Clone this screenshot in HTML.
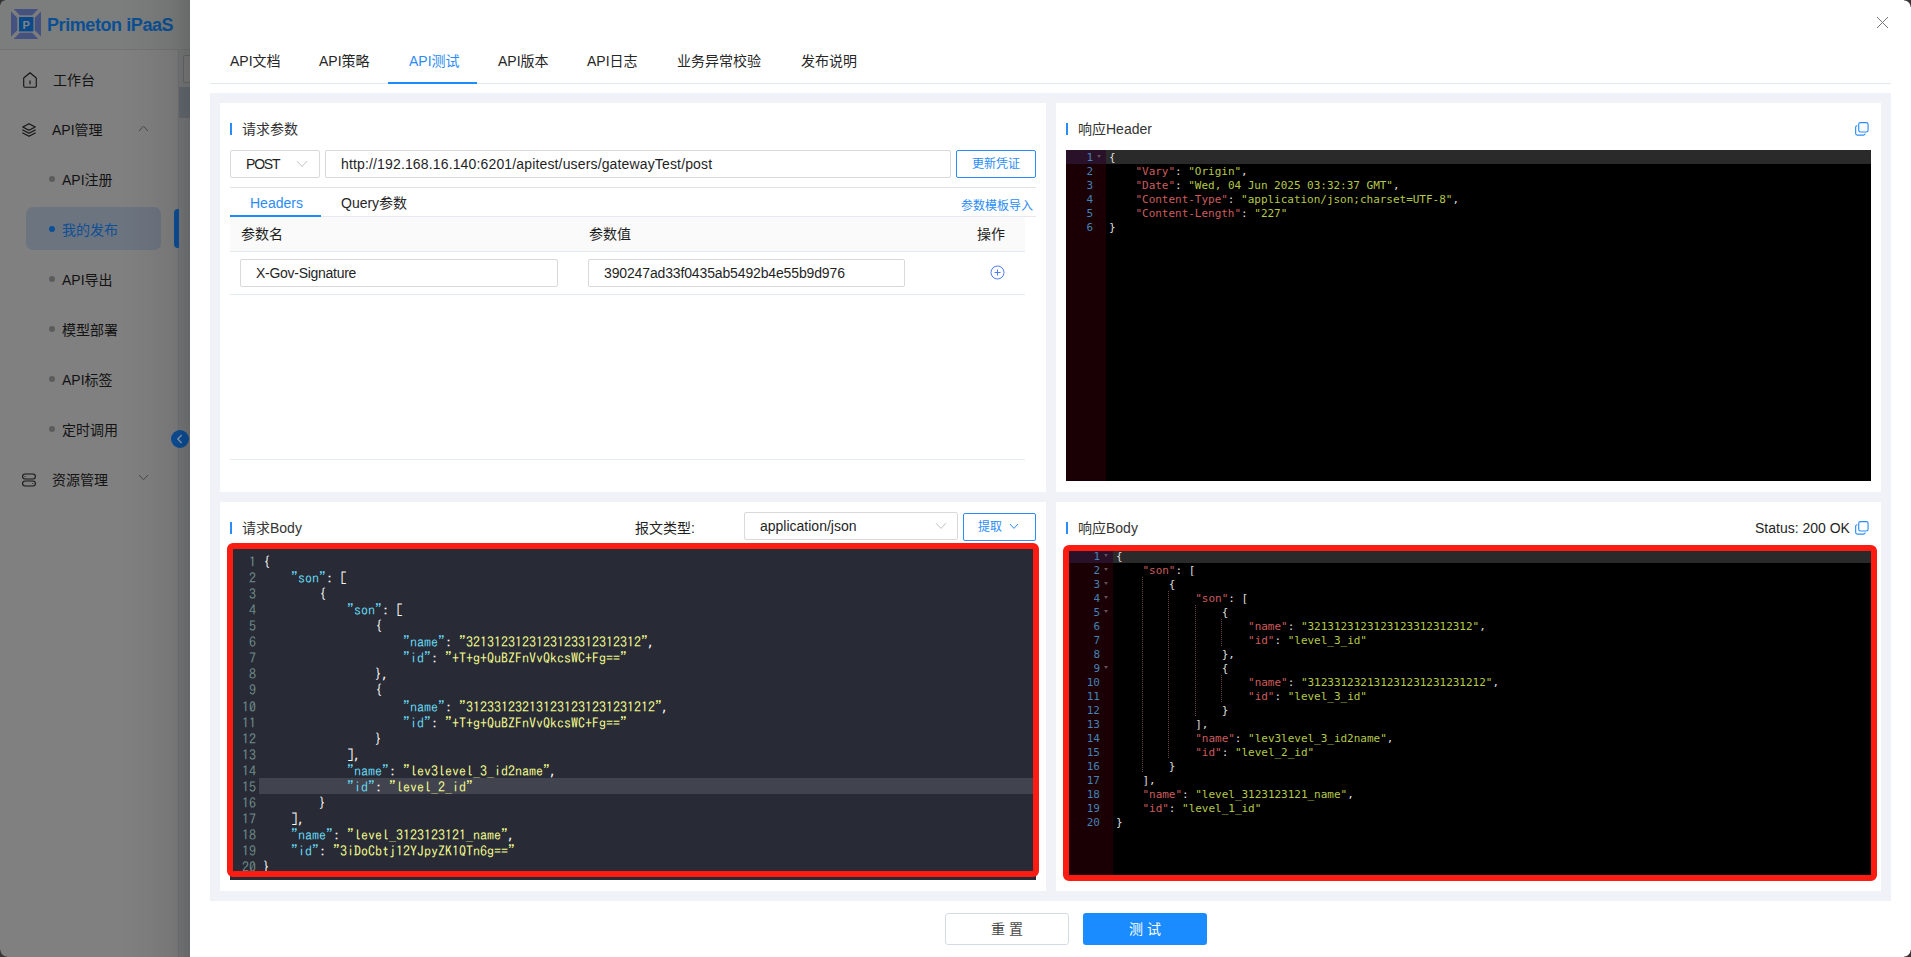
<!DOCTYPE html><html lang="zh-CN"><head><meta charset="utf-8"><title>Primeton iPaaS</title><style>
*{box-sizing:border-box;margin:0;padding:0}
html,body{width:1911px;height:957px;overflow:hidden;background:#fff}
body{position:relative;font-family:"Liberation Sans","Noto Sans CJK SC",sans-serif;font-size:14px;color:#262626;-webkit-font-smoothing:antialiased}
.abs{position:absolute}
.t{position:absolute;white-space:nowrap;line-height:20px;height:20px}
/* ---------- dimmed background app ---------- */
#bg{position:absolute;left:0;top:0;width:190px;height:957px;background:#7a7b7c;overflow:hidden}
#side{position:absolute;left:0;top:50px;width:178px;height:907px;background:#808080}
#sideborder{position:absolute;left:178px;top:50px;width:1px;height:907px;background:#747474}
#hdr{position:absolute;left:0;top:0;width:190px;height:49px;background:#7c7e7d}
#hdrline{position:absolute;left:0;top:49px;width:190px;height:1px;background:#737474}
#shadow{position:absolute;left:120px;top:0;width:70px;height:957px;background:linear-gradient(90deg,rgba(0,0,0,0) 0%,rgba(0,0,0,.03) 40%,rgba(0,0,0,.08) 75%,rgba(0,0,0,.16) 100%)}
.mi{position:absolute;left:0;width:178px;height:20px}
.mi .t{color:#131313}
.dot{position:absolute;width:6px;height:6px;border-radius:50%;background:#5c5c5c}
/* ---------- drawer ---------- */
#drawer{position:absolute;left:190px;top:0;width:1721px;height:957px;background:#fff}
.tab{position:absolute;top:51px;height:20px;line-height:20px;font-size:14px;color:#262626;white-space:nowrap}
.panel{position:absolute;background:#fff}
.bar{position:absolute;width:2px;height:12px;background:#2b8cf7}
.inp{position:absolute;border:1px solid #d9d9d9;border-radius:2px;background:#fff}
.line{position:absolute;height:1px;background:#e4e9f0}
.blue{color:#2b8cf7}
/* editors */
.ace{position:absolute;background:#000;overflow:hidden;font-family:"DejaVu Sans Mono","Liberation Mono",monospace;font-size:11px}
.ace .gut{position:absolute;left:0;top:0;bottom:0;width:40px;background:#1a0005}
.ace .row{position:absolute;left:0;right:0;height:14px;line-height:14px;white-space:pre}
.ace .ln{position:absolute;left:0;width:27px;text-align:right;color:#4682b4;height:14px;line-height:14px}
.ace .code{position:absolute;left:44px;color:#dedede;letter-spacing:-0.02px;height:14px;line-height:14px;white-space:pre}
.ace .k{color:#cd5c5c}
.ace .s{color:#b5c947}
.ace .fold{position:absolute;left:32px;top:4px;width:0;height:0;border-left:2.5px solid transparent;border-right:2.5px solid transparent;border-top:3px solid #624e56}
.ace .ig{position:absolute;width:1px;background-image:linear-gradient(#6a4646 50%,transparent 50%);background-size:1px 2px}
.cm{position:absolute;background:#282a36;overflow:hidden;font-family:"IPAGothic","Liberation Mono",monospace;font-size:14px;color:#f8f8f2}
.cm .row{position:absolute;left:0;right:0;height:16px;line-height:16px;white-space:pre}
.cm .ln{position:absolute;left:0;width:26px;text-align:right;color:#6d8a88}
.cm .code{position:absolute;left:33px;white-space:pre}
.cm .k{color:#66d9ef}
.cm .s{color:#f1fa8c}
.red{position:absolute;border:6px solid #fc1c12;border-radius:6px}
</style></head><body>
<div id="bg">
<div id="hdr"></div><div id="hdrline"></div><div id="side"></div><div id="sideborder"></div>
<div class="abs" style="left:179px;top:87px;width:11px;height:31px;background:#676d74"></div>
<div class="abs" style="left:183px;top:55px;width:12px;height:28px;border:1px solid #6a6a6a;border-radius:2px;background:#7e7e7e"></div>
<svg class="abs" style="left:11px;top:9px" width="30" height="30" viewBox="0 0 30 30">
<polygon points="2.6,0 27.4,0 21.2,6.2 8.8,6.2" fill="#45527f"/>
<polygon points="2.6,30 27.4,30 21.2,23.8 8.8,23.8" fill="#45527f"/>
<polygon points="0,2.6 0,27.4 6.2,21.2 6.2,8.8" fill="#45527f"/>
<polygon points="30,2.6 30,27.4 23.8,21.2 23.8,8.8" fill="#45527f"/>
<rect x="8" y="8" width="14.4" height="14.4" fill="#0b4a8a"/>
<text x="15.2" y="19.6" font-family="Liberation Sans, sans-serif" font-weight="bold" font-size="11" fill="#808486" text-anchor="middle">P</text>
</svg>
<div class="t" style="left:47px;top:13px;font-size:18px;font-weight:bold;color:#0b4f93;line-height:24px;height:24px;letter-spacing:-0.42px">Primeton iPaaS</div>
<svg class="abs" style="left:22px;top:71px" width="16" height="18" viewBox="0 0 16 18"><path d="M1.7 7 L8 1.8 L14.3 7 V15 a1.2 1.2 0 0 1 -1.2 1.2 H2.9 a1.2 1.2 0 0 1 -1.2 -1.2 Z" fill="none" stroke="#161616" stroke-width="1.15" stroke-linejoin="round"/><path d="M8 9.6 V13.2" stroke="#161616" stroke-width="1.15"/></svg>
<div class="t" style="left:53px;top:70px;color:#131313">工作台</div>
<svg class="abs" style="left:21px;top:122px" width="16" height="16" viewBox="0 0 16 16"><path d="M8 1.8 L14.2 5 L8 8.2 L1.8 5 Z" fill="none" stroke="#131313" stroke-width="1.2" stroke-linejoin="round"/><path d="M1.8 8 L8 11.2 L14.2 8" fill="none" stroke="#131313" stroke-width="1.2" stroke-linejoin="round" stroke-linecap="round"/><path d="M1.8 11 L8 14.2 L14.2 11" fill="none" stroke="#131313" stroke-width="1.2" stroke-linejoin="round" stroke-linecap="round"/></svg>
<div class="t" style="left:52px;top:120px;color:#131313">API管理</div>
<svg class="abs" style="left:138px;top:125px" width="11" height="7" viewBox="0 0 11 7"><path d="M1 6 L5.5 1.2 L10 6" fill="none" stroke="#4a4a4a" stroke-width="1"/></svg>
<div class="abs" style="left:26px;top:207px;width:135px;height:43px;border-radius:7px;background:#6c7480"></div>
<div class="abs" style="left:174px;top:209px;width:5px;height:39px;border-radius:4px 0 0 4px;background:#0c4f99"></div>
<div class="dot" style="left:49px;top:176px;"></div>
<div class="t" style="left:62px;top:170px;color:#131313">API注册</div>
<div class="dot" style="left:49px;top:226px;background:#0c4f99"></div>
<div class="t" style="left:62px;top:220px;color:#0f4f93">我的发布</div>
<div class="dot" style="left:49px;top:276px;"></div>
<div class="t" style="left:62px;top:270px;color:#131313">API导出</div>
<div class="dot" style="left:49px;top:326px;"></div>
<div class="t" style="left:62px;top:320px;color:#131313">模型部署</div>
<div class="dot" style="left:49px;top:376px;"></div>
<div class="t" style="left:62px;top:370px;color:#131313">API标签</div>
<div class="dot" style="left:49px;top:426px;"></div>
<div class="t" style="left:62px;top:420px;color:#131313">定时调用</div>
<svg class="abs" style="left:21px;top:472px" width="16" height="16" viewBox="0 0 16 16"><rect x="1.6" y="2" width="12.8" height="5" rx="2.5" fill="none" stroke="#161616" stroke-width="1.1"/><rect x="1.6" y="9" width="12.8" height="5" rx="2.5" fill="none" stroke="#161616" stroke-width="1.1"/><circle cx="4.2" cy="4.5" r="0.55" fill="#161616"/><circle cx="11.8" cy="11.5" r="0.55" fill="#161616"/></svg>
<div class="t" style="left:52px;top:470px;color:#131313">资源管理</div>
<svg class="abs" style="left:138px;top:474px" width="11" height="7" viewBox="0 0 11 7"><path d="M1 1 L5.5 5.8 L10 1" fill="none" stroke="#4a4a4a" stroke-width="1"/></svg>
<div class="abs" style="left:171px;top:430px;width:18px;height:18px;border-radius:50%;background:#0c4f99"></div>
<svg class="abs" style="left:171px;top:430px" width="18" height="18" viewBox="0 0 18 18"><path d="M10.6 5 L6.8 9 L10.6 13" fill="none" stroke="#8a9db5" stroke-width="1.4"/></svg>
<div id="shadow"></div>
<div class="abs" style="left:0;top:0;width:5px;height:5px;background:radial-gradient(circle at 100% 100%,transparent 4px,#333 5px)"></div>
<div class="abs" style="left:0;top:950px;width:7px;height:7px;background:radial-gradient(circle at 100% 0,transparent 6px,#363636 7px)"></div>
</div>
<div id="drawer"></div>
<div class="abs" style="left:1904px;top:0;width:7px;height:7px;background:radial-gradient(circle at 0 100%,transparent 6px,#363636 7px)"></div>
<div class="abs" style="left:1904px;top:950px;width:7px;height:7px;background:radial-gradient(circle at 0 0,transparent 6px,#363636 7px)"></div>
<svg class="abs" style="left:1876px;top:16px" width="13" height="13" viewBox="0 0 13 13"><path d="M1 1 L12 12 M12 1 L1 12" stroke="#757575" stroke-width="1" fill="none"/></svg>
<div class="tab" style="left:230px">API文档</div>
<div class="tab" style="left:319px">API策略</div>
<div class="tab blue" style="left:409px">API测试</div>
<div class="tab" style="left:498px">API版本</div>
<div class="tab" style="left:587px">API日志</div>
<div class="tab" style="left:677px">业务异常校验</div>
<div class="tab" style="left:801px">发布说明</div>
<div class="line" style="left:210px;top:83px;width:1681px;background:#e2e8f0"></div>
<div class="abs" style="left:388px;top:82px;width:89px;height:2px;background:#1a8cff"></div>
<div class="abs" style="left:210px;top:93px;width:1681px;height:808px;background:#f0f2f8"></div>
<div class="panel" style="left:220px;top:103px;width:826px;height:389px"></div>
<div class="panel" style="left:1056px;top:103px;width:825px;height:389px"></div>
<div class="panel" style="left:220px;top:502px;width:826px;height:389px"></div>
<div class="panel" style="left:1056px;top:502px;width:825px;height:389px"></div>
<div class="bar" style="left:230px;top:123px"></div>
<div class="t" style="left:242px;top:119px;color:#333">请求参数</div>
<div class="inp" style="left:230px;top:150px;width:90px;height:28px"></div>
<div class="t" style="left:246px;top:154px;color:#1f1f1f;letter-spacing:-1.2px">POST</div>
<svg class="abs" style="left:296px;top:160px" width="12" height="8" viewBox="0 0 12 8"><path d="M1 1.2 L6 6.4 L11 1.2" fill="none" stroke="#bfbfbf" stroke-width="1"/></svg>
<div class="inp" style="left:325px;top:150px;width:626px;height:28px"></div>
<div class="t" style="left:341px;top:154px;color:#1f1f1f;letter-spacing:0.15px">http://192.168.16.140:6201/apitest/users/gatewayTest/post</div>
<div class="inp" style="left:956px;top:150px;width:80px;height:28px;border-color:#2b8cf7"></div>
<div class="t blue" style="left:956px;top:154px;width:80px;text-align:center;font-size:12px">更新凭证</div>
<div class="line" style="left:230px;top:187px;width:806px;background:#e3e3e3"></div>
<div class="t blue" style="left:250px;top:193px">Headers</div>
<div class="t" style="left:341px;top:193px;color:#262626">Query参数</div>
<div class="t blue" style="left:961px;top:196px;font-size:12px">参数模板导入</div>
<div class="line" style="left:230px;top:216px;width:806px;background:#e6eaf0"></div>
<div class="abs" style="left:230px;top:215px;width:91px;height:2px;background:#1a8cff"></div>
<div class="abs" style="left:230px;top:217px;width:795px;height:34px;background:#fafafa"></div>
<div class="line" style="left:230px;top:251px;width:795px;background:#e6eaf2"></div>
<div class="t" style="left:241px;top:224px;color:#1f1f1f">参数名</div>
<div class="t" style="left:589px;top:224px;color:#1f1f1f">参数值</div>
<div class="t" style="left:977px;top:224px;color:#1f1f1f">操作</div>
<div class="inp" style="left:240px;top:259px;width:318px;height:28px"></div>
<div class="t" style="left:256px;top:263px;color:#1f1f1f;letter-spacing:-0.28px">X-Gov-Signature</div>
<div class="inp" style="left:588px;top:259px;width:317px;height:28px"></div>
<div class="t" style="left:604px;top:263px;color:#1f1f1f;letter-spacing:-0.14px">390247ad33f0435ab5492b4e55b9d976</div>
<svg class="abs" style="left:990px;top:265px" width="15" height="15" viewBox="0 0 15 15"><circle cx="7.5" cy="7.5" r="6.5" fill="none" stroke="#4d7cf3" stroke-width="1"/><path d="M4.5 7.5 H10.5 M7.5 4.5 V10.5" stroke="#4d7cf3" stroke-width="1"/></svg>
<div class="line" style="left:230px;top:294px;width:795px;background:#e6eaf2"></div>
<div class="line" style="left:230px;top:459px;width:795px;background:#e6eaf2"></div>
<div class="bar" style="left:1066px;top:123px"></div>
<div class="t" style="left:1078px;top:119px;color:#333">响应Header</div>
<svg class="abs" style="left:1855px;top:122px" width="14" height="14" viewBox="0 0 15 15"><rect x="4" y="0.7" width="10" height="10" rx="1.8" fill="none" stroke="#2b8cf7" stroke-width="1.2"/><path d="M2.6 4 H2.4 a1.7 1.7 0 0 0 -1.7 1.7 V12.4 a1.7 1.7 0 0 0 1.7 1.7 H9.2 a1.7 1.7 0 0 0 1.7 -1.7 V12.2" fill="none" stroke="#2b8cf7" stroke-width="1.2"/></svg>
<div class="ace" style="left:1066px;top:150px;width:805px;height:331px">
<div class="gut" style="width:40px"></div>
<div class="abs" style="left:0;top:0;width:40px;height:14px;background:#2a112a"></div>
<div class="abs" style="left:40px;top:0;right:0;height:14px;background:#2a2a2a"></div>
<div class="row" style="top:1px"><span class="ln" style="width:27px">1</span><i class="fold" style="left:31px"></i><span class="code" style="left:43px">{</span></div>
<div class="row" style="top:15px"><span class="ln" style="width:27px">2</span><span class="code" style="left:43px">    <span class="k">&quot;Vary&quot;</span>: <span class="s">&quot;Origin&quot;</span>,</span></div>
<div class="row" style="top:29px"><span class="ln" style="width:27px">3</span><span class="code" style="left:43px">    <span class="k">&quot;Date&quot;</span>: <span class="s">&quot;Wed, 04 Jun 2025 03:32:37 GMT&quot;</span>,</span></div>
<div class="row" style="top:43px"><span class="ln" style="width:27px">4</span><span class="code" style="left:43px">    <span class="k">&quot;Content-Type&quot;</span>: <span class="s">&quot;application/json;charset=UTF-8&quot;</span>,</span></div>
<div class="row" style="top:57px"><span class="ln" style="width:27px">5</span><span class="code" style="left:43px">    <span class="k">&quot;Content-Length&quot;</span>: <span class="s">&quot;227&quot;</span></span></div>
<div class="row" style="top:71px"><span class="ln" style="width:27px">6</span><span class="code" style="left:43px">}</span></div>
</div>
<div class="bar" style="left:230px;top:522px"></div>
<div class="t" style="left:242px;top:518px;color:#333">请求Body</div>
<div class="t" style="left:635px;top:518px;color:#1f1f1f">报文类型:</div>
<div class="inp" style="left:744px;top:512px;width:214px;height:28px"></div>
<div class="t" style="left:760px;top:516px;color:#1f1f1f">application/json</div>
<svg class="abs" style="left:935px;top:522px" width="12" height="8" viewBox="0 0 12 8"><path d="M1 1.2 L6 6.4 L11 1.2" fill="none" stroke="#bfbfbf" stroke-width="1"/></svg>
<div class="inp" style="left:963px;top:513px;width:73px;height:28px;border-color:#2b8cf7"></div>
<div class="t blue" style="left:978px;top:517px;font-size:12px">提取</div>
<svg class="abs" style="left:1009px;top:523px" width="10" height="7" viewBox="0 0 10 7"><path d="M1 1 L5 5.4 L9 1" fill="none" stroke="#2b8cf7" stroke-width="1"/></svg>
<div class="cm" style="left:230px;top:549px;width:806px;height:331px">
<div class="abs" style="left:29px;top:228.84px;right:0;height:16px;background:#41444f"></div>
<div class="row" style="top:5.00px"><span class="ln">1</span><span class="code">{</span></div>
<div class="row" style="top:21.06px"><span class="ln">2</span><span class="code">    <span class="k">&quot;son&quot;</span>: [</span></div>
<div class="row" style="top:37.12px"><span class="ln">3</span><span class="code">        {</span></div>
<div class="row" style="top:53.18px"><span class="ln">4</span><span class="code">            <span class="k">&quot;son&quot;</span>: [</span></div>
<div class="row" style="top:69.24px"><span class="ln">5</span><span class="code">                {</span></div>
<div class="row" style="top:85.30px"><span class="ln">6</span><span class="code">                    <span class="k">&quot;name&quot;</span>: <span class="s">&quot;3213123123123123312312312&quot;</span>,</span></div>
<div class="row" style="top:101.36px"><span class="ln">7</span><span class="code">                    <span class="k">&quot;id&quot;</span>: <span class="s">&quot;+T+g+QuBZFnVvQkcsWC+Fg==&quot;</span></span></div>
<div class="row" style="top:117.42px"><span class="ln">8</span><span class="code">                },</span></div>
<div class="row" style="top:133.48px"><span class="ln">9</span><span class="code">                {</span></div>
<div class="row" style="top:149.54px"><span class="ln">10</span><span class="code">                    <span class="k">&quot;name&quot;</span>: <span class="s">&quot;312331232131231231231231212&quot;</span>,</span></div>
<div class="row" style="top:165.60px"><span class="ln">11</span><span class="code">                    <span class="k">&quot;id&quot;</span>: <span class="s">&quot;+T+g+QuBZFnVvQkcsWC+Fg==&quot;</span></span></div>
<div class="row" style="top:181.66px"><span class="ln">12</span><span class="code">                }</span></div>
<div class="row" style="top:197.72px"><span class="ln">13</span><span class="code">            ],</span></div>
<div class="row" style="top:213.78px"><span class="ln">14</span><span class="code">            <span class="k">&quot;name&quot;</span>: <span class="s">&quot;lev3level_3_id2name&quot;</span>,</span></div>
<div class="row" style="top:229.84px"><span class="ln">15</span><span class="code">            <span class="k">&quot;id&quot;</span>: <span class="s">&quot;level_2_id&quot;</span></span></div>
<div class="row" style="top:245.90px"><span class="ln">16</span><span class="code">        }</span></div>
<div class="row" style="top:261.96px"><span class="ln">17</span><span class="code">    ],</span></div>
<div class="row" style="top:278.02px"><span class="ln">18</span><span class="code">    <span class="k">&quot;name&quot;</span>: <span class="s">&quot;level_3123123121_name&quot;</span>,</span></div>
<div class="row" style="top:294.08px"><span class="ln">19</span><span class="code">    <span class="k">&quot;id&quot;</span>: <span class="s">&quot;3iDoCbtj12YJpyZK1QTn6g==&quot;</span></span></div>
<div class="row" style="top:310.14px"><span class="ln">20</span><span class="code">}</span></div>
</div>
<div class="red" style="left:227px;top:543px;width:812px;height:334px"></div>
<div class="bar" style="left:1066px;top:522px"></div>
<div class="t" style="left:1078px;top:518px;color:#333">响应Body</div>
<div class="t" style="left:1755px;top:518px;color:#1f1f1f">Status: 200 OK</div>
<svg class="abs" style="left:1855px;top:521px" width="14" height="14" viewBox="0 0 15 15"><rect x="4" y="0.7" width="10" height="10" rx="1.8" fill="none" stroke="#2b8cf7" stroke-width="1.2"/><path d="M2.6 4 H2.4 a1.7 1.7 0 0 0 -1.7 1.7 V12.4 a1.7 1.7 0 0 0 1.7 1.7 H9.2 a1.7 1.7 0 0 0 1.7 -1.7 V12.2" fill="none" stroke="#2b8cf7" stroke-width="1.2"/></svg>
<div class="ace" style="left:1066px;top:549px;width:805px;height:329px">
<div class="gut" style="width:47px"></div>
<div class="abs" style="left:0;top:0;width:47px;height:14px;background:#2a112a"></div>
<div class="abs" style="left:47px;top:0;right:0;height:14px;background:#2a2a2a"></div>
<div class="ig" style="left:76.0px;top:28px;height:196px"></div>
<div class="ig" style="left:102.0px;top:42px;height:168px"></div>
<div class="ig" style="left:129.0px;top:56px;height:112px"></div>
<div class="ig" style="left:155.0px;top:70px;height:28px"></div>
<div class="ig" style="left:155.0px;top:126px;height:28px"></div>
<div class="row" style="top:1px"><span class="ln" style="width:34px">1</span><i class="fold" style="left:38px"></i><span class="code" style="left:50px">{</span></div>
<div class="row" style="top:15px"><span class="ln" style="width:34px">2</span><i class="fold" style="left:38px"></i><span class="code" style="left:50px">    <span class="k">&quot;son&quot;</span>: [</span></div>
<div class="row" style="top:29px"><span class="ln" style="width:34px">3</span><i class="fold" style="left:38px"></i><span class="code" style="left:50px">        {</span></div>
<div class="row" style="top:43px"><span class="ln" style="width:34px">4</span><i class="fold" style="left:38px"></i><span class="code" style="left:50px">            <span class="k">&quot;son&quot;</span>: [</span></div>
<div class="row" style="top:57px"><span class="ln" style="width:34px">5</span><i class="fold" style="left:38px"></i><span class="code" style="left:50px">                {</span></div>
<div class="row" style="top:71px"><span class="ln" style="width:34px">6</span><span class="code" style="left:50px">                    <span class="k">&quot;name&quot;</span>: <span class="s">&quot;3213123123123123312312312&quot;</span>,</span></div>
<div class="row" style="top:85px"><span class="ln" style="width:34px">7</span><span class="code" style="left:50px">                    <span class="k">&quot;id&quot;</span>: <span class="s">&quot;level_3_id&quot;</span></span></div>
<div class="row" style="top:99px"><span class="ln" style="width:34px">8</span><span class="code" style="left:50px">                },</span></div>
<div class="row" style="top:113px"><span class="ln" style="width:34px">9</span><i class="fold" style="left:38px"></i><span class="code" style="left:50px">                {</span></div>
<div class="row" style="top:127px"><span class="ln" style="width:34px">10</span><span class="code" style="left:50px">                    <span class="k">&quot;name&quot;</span>: <span class="s">&quot;312331232131231231231231212&quot;</span>,</span></div>
<div class="row" style="top:141px"><span class="ln" style="width:34px">11</span><span class="code" style="left:50px">                    <span class="k">&quot;id&quot;</span>: <span class="s">&quot;level_3_id&quot;</span></span></div>
<div class="row" style="top:155px"><span class="ln" style="width:34px">12</span><span class="code" style="left:50px">                }</span></div>
<div class="row" style="top:169px"><span class="ln" style="width:34px">13</span><span class="code" style="left:50px">            ],</span></div>
<div class="row" style="top:183px"><span class="ln" style="width:34px">14</span><span class="code" style="left:50px">            <span class="k">&quot;name&quot;</span>: <span class="s">&quot;lev3level_3_id2name&quot;</span>,</span></div>
<div class="row" style="top:197px"><span class="ln" style="width:34px">15</span><span class="code" style="left:50px">            <span class="k">&quot;id&quot;</span>: <span class="s">&quot;level_2_id&quot;</span></span></div>
<div class="row" style="top:211px"><span class="ln" style="width:34px">16</span><span class="code" style="left:50px">        }</span></div>
<div class="row" style="top:225px"><span class="ln" style="width:34px">17</span><span class="code" style="left:50px">    ],</span></div>
<div class="row" style="top:239px"><span class="ln" style="width:34px">18</span><span class="code" style="left:50px">    <span class="k">&quot;name&quot;</span>: <span class="s">&quot;level_3123123121_name&quot;</span>,</span></div>
<div class="row" style="top:253px"><span class="ln" style="width:34px">19</span><span class="code" style="left:50px">    <span class="k">&quot;id&quot;</span>: <span class="s">&quot;level_1_id&quot;</span></span></div>
<div class="row" style="top:267px"><span class="ln" style="width:34px">20</span><span class="code" style="left:50px">}</span></div>
</div>
<div class="red" style="left:1063px;top:545px;width:814px;height:336px"></div>
<div class="inp" style="left:945px;top:913px;width:124px;height:32px;border-color:#d5dbe6;border-radius:3px"></div>
<div class="t" style="left:945px;top:919px;width:124px;text-align:center;color:#4a4a4a;letter-spacing:4px;padding-left:4px">重置</div>
<div class="abs" style="left:1083px;top:913px;width:124px;height:32px;background:#1a8cff;border-radius:3px"></div>
<div class="t" style="left:1083px;top:919px;width:124px;text-align:center;color:#fff;letter-spacing:4px;padding-left:4px">测试</div>
</body></html>
